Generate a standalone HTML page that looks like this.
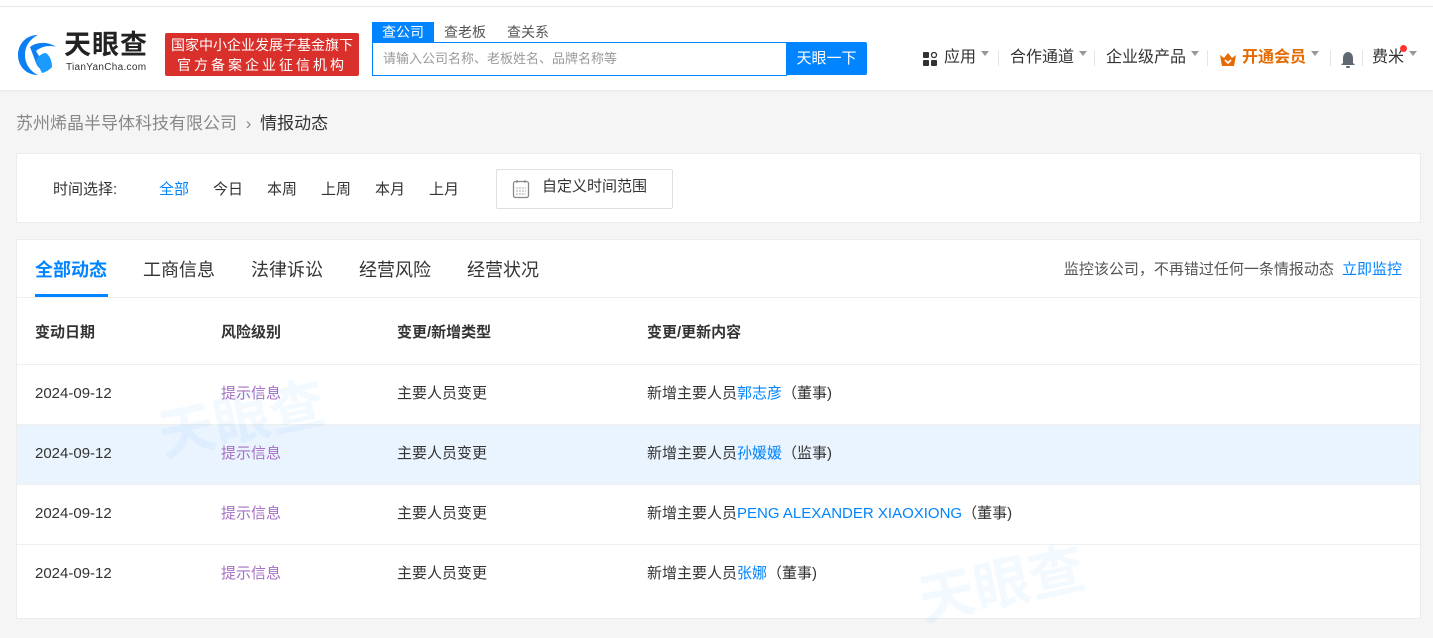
<!DOCTYPE html><html><head><meta charset="utf-8"><style>
*{margin:0;padding:0;box-sizing:border-box}
body{width:1433px;height:610px;overflow:hidden;background:#f5f5f5;font-family:"Liberation Sans","Noto Sans CJK SC",sans-serif;color:#333;position:relative}
.hdr{position:absolute;left:0;top:0;width:1433px;height:90px;background:#fff;border-top:6px solid #fff;box-shadow:0 1px 3px rgba(0,0,0,.06)}
.topline{position:absolute;top:6px;left:0;width:1433px;height:1px;background:#e8e8e8}
.abs{position:absolute}
.card{position:absolute;left:16px;width:1405px;background:#fff;border:1px solid #ececec}
.blue{color:#0084ff}
.row{position:absolute;left:0;width:1403px;height:60px;border-top:1px solid #efefef;font-size:15px;line-height:58px}
.row span{position:absolute;top:0}
.c1{left:18px}.c2{left:204px;color:#a56fc3}.c3{left:380px}.c4{left:630px}
.caret{display:inline-block;border:4px solid transparent;border-top:5px solid #999;margin-left:5px;vertical-align:2px}
.nav{position:absolute;top:46px;font-size:16px;color:#333;line-height:24px}
.sep{position:absolute;top:50px;width:1px;height:16px;background:#e5e5e5}
</style></head><body>
<div class="hdr"></div><div class="topline"></div>
<svg class="abs" style="left:16px;top:33px" width="46" height="44" viewBox="0 0 46 44"><path d="M22 2C10 2 2 11 2 22s8 20 20 20c-8-4-13-11-13-20S14 6 22 2z" fill="#0c7ff2"/><path d="M14 14c6-5 18-6 26 0-6-2-14-1-20 4l12 20c-6 0-10-3-12-8L14 14z" fill="#0c7ff2"/><path d="M30 20c4 3 6 8 6 14-3 3-6 5-10 6l-6-12c2-5 6-8 10-8z" fill="#1b9bff"/></svg>
<div class="abs" style="left:64px;top:30px;font-size:27px;line-height:30px;font-weight:bold;color:#222;letter-spacing:1px">天眼查</div>
<div class="abs" style="left:66px;top:62px;font-size:10px;line-height:12px;color:#333;letter-spacing:.3px">TianYanCha.com</div>
<div class="abs" style="left:165px;top:33px;width:194px;height:43px;background:#d9302c;border-radius:2px;color:#fff;font-size:14px;line-height:20px;text-align:center;padding-top:2px">国家中小企业发展子基金旗下<br><span style="letter-spacing:3px">官方备案企业征信机构</span></div>
<div class="abs" style="left:372px;top:22px;width:62px;height:20px;background:#0084ff;color:#fff;font-size:14px;text-align:center;line-height:20px">查公司</div>
<div class="abs" style="left:444px;top:22px;font-size:14px;color:#555;line-height:20px">查老板</div>
<div class="abs" style="left:507px;top:22px;font-size:14px;color:#555;line-height:20px">查关系</div>
<div class="abs" style="left:372px;top:42px;width:415px;height:34px;border:1px solid #0084ff;font-size:13px;color:#999;line-height:32px;padding-left:10px">请输入公司名称、老板姓名、品牌名称等</div>
<div class="abs" style="left:786px;top:42px;width:81px;height:33px;background:#0084ff;color:#fff;font-size:15px;text-align:center;line-height:33px;border-radius:0 2px 2px 0">天眼一下</div>
<svg class="abs" style="left:923px;top:52px" width="15" height="15"><rect x="0" y="0" width="6" height="6" rx="1" fill="#333"/><circle cx="11" cy="3" r="2.5" fill="none" stroke="#333" stroke-width="1.3"/><rect x="0" y="8" width="6" height="6" rx="1" fill="#333"/><rect x="8" y="8" width="6" height="6" rx="1" fill="#333"/></svg>
<div class="nav" style="left:944px">应用<i class="caret"></i></div>
<div class="sep" style="left:998px"></div>
<div class="nav" style="left:1010px">合作通道<i class="caret"></i></div>
<div class="sep" style="left:1094px"></div>
<div class="nav" style="left:1106px">企业级产品<i class="caret"></i></div>
<div class="sep" style="left:1207px"></div>
<svg class="abs" style="left:1219px;top:52px" width="18" height="15"><path d="M1 3l4 3 4-5 4 5 4-3-2 11H3z" fill="#e56a00"/><path d="M6 8l3 3 3-3" stroke="#fff" stroke-width="1.8" fill="none"/></svg>
<div class="nav" style="left:1242px;color:#e56a00;font-weight:bold">开通会员<i class="caret"></i></div>
<div class="sep" style="left:1330px"></div>
<svg class="abs" style="left:1340px;top:51px" width="16" height="18"><path d="M8 1c-3 0-5 3-5 6v5l-2 2h14l-2-2V7c0-3-2-6-5-6z" fill="#5f6770"/><rect x="6" y="15" width="4" height="2" rx="1" fill="#5f6770"/></svg>
<div class="sep" style="left:1362px"></div>
<div class="nav" style="left:1372px">费米<i class="caret"></i></div>
<div class="abs" style="left:1400px;top:45px;width:7px;height:7px;border-radius:50%;background:#f33"></div>
<div class="abs" style="left:16px;top:109px;font-size:17px;color:#888">苏州烯晶半导体科技有限公司 <span style="margin:0 4px">›</span> <span style="color:#333">情报动态</span></div>
<div class="card" style="top:153px;height:70px">
<div class="abs" style="left:36px;top:24px;font-size:15px">时间选择:</div>
<div class="abs blue" style="left:142px;top:24px;font-size:15px">全部</div>
<div class="abs" style="left:196px;top:24px;font-size:15px">今日</div>
<div class="abs" style="left:250px;top:24px;font-size:15px">本周</div>
<div class="abs" style="left:304px;top:24px;font-size:15px">上周</div>
<div class="abs" style="left:358px;top:24px;font-size:15px">本月</div>
<div class="abs" style="left:412px;top:24px;font-size:15px">上月</div>
<div class="abs" style="left:479px;top:15px;width:177px;height:40px;border:1px solid #e0e0e0;border-radius:2px;font-size:15px;line-height:34px;padding-left:45px">自定义时间范围</div>
<svg class="abs" style="left:495px;top:25px" width="18" height="20"><rect x="1.5" y="2.5" width="15" height="16" rx="2" fill="none" stroke="#888" stroke-width="1.3"/><line x1="5" y1="1" x2="5" y2="4" stroke="#888"/><line x1="13" y1="1" x2="13" y2="4" stroke="#888"/><path d="M4 9h10M4 12h10M4 15h10" stroke="#aaa" stroke-dasharray="2 1"/></svg>
</div>
<div class="card" style="top:239px;height:380px">
<div class="abs blue" style="left:18px;top:16px;font-size:18px;font-weight:bold">全部动态</div>
<div class="abs" style="left:18px;top:54px;width:73px;height:3px;background:#0084ff"></div>
<div class="abs" style="left:126px;top:16px;font-size:18px">工商信息</div>
<div class="abs" style="left:234px;top:16px;font-size:18px">法律诉讼</div>
<div class="abs" style="left:342px;top:16px;font-size:18px">经营风险</div>
<div class="abs" style="left:450px;top:16px;font-size:18px">经营状况</div>
<div class="abs" style="right:18px;top:18px;font-size:15px;color:#555">监控该公司，不再错过任何一条情报动态 <span class="blue" style="margin-left:4px">立即监控</span></div>
<div class="abs" style="left:0;top:57px;width:1403px;height:1px;background:#efefef"></div>
<div class="row" style="top:64px;border:0;font-weight:bold"><span class="c1">变动日期</span><span class="c1" style="left:204px">风险级别</span><span class="c3">变更/新增类型</span><span class="c4">变更/更新内容</span></div>
<div class="row" style="top:124px"><span class="c1">2024-09-12</span><span class="c2">提示信息</span><span class="c3">主要人员变更</span><span class="c4">新增主要人员<b class="blue" style="font-weight:normal">郭志彦</b>（董事)</span></div>
<div class="row" style="top:184px;background:#eaf4fe"><span class="c1">2024-09-12</span><span class="c2">提示信息</span><span class="c3">主要人员变更</span><span class="c4">新增主要人员<b class="blue" style="font-weight:normal">孙媛媛</b>（监事)</span></div>
<div class="row" style="top:244px"><span class="c1">2024-09-12</span><span class="c2">提示信息</span><span class="c3">主要人员变更</span><span class="c4">新增主要人员<b class="blue" style="font-weight:normal">PENG ALEXANDER XIAOXIONG</b>（董事)</span></div>
<div class="row" style="top:304px"><span class="c1">2024-09-12</span><span class="c2">提示信息</span><span class="c3">主要人员变更</span><span class="c4">新增主要人员<b class="blue" style="font-weight:normal">张娜</b>（董事)</span></div>
<div class="abs" style="left:140px;top:135px;font-size:56px;font-weight:bold;color:rgba(0,132,255,.05);transform:rotate(-12deg)">天眼查</div>
<div class="abs" style="left:900px;top:300px;font-size:56px;font-weight:bold;color:rgba(0,132,255,.05);transform:rotate(-12deg)">天眼查</div>
</div>
</body></html>
